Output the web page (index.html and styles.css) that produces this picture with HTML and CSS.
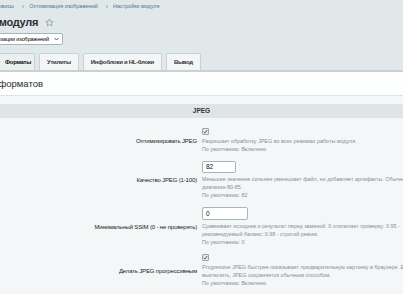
FILE: index.html
```html
<!DOCTYPE html>
<html lang="ru">
<head>
    <meta charset="UTF-8">
    <title>Настройки модуля</title>
    <link rel="stylesheet" href="styles.css">
</head>
<body>
    <div class="top">
        <div class="crumbs">
            <span class="first"><a href="#">Сервисы</a></span>
            <span class="sep">›</span>
            <a href="#">Оптимизация изображений</a>
            <span class="sep">›</span>
            <a href="#">Настройки модуля</a>
        </div>
        <div class="title-row">
            <h1>Настройки модуля</h1>
            <svg class="star" width="9" height="9" viewBox="0 0 24 24"><path d="M12 2.5l2.9 6.3 6.8.7-5.1 4.6 1.5 6.8L12 17.4l-6.1 3.5 1.5-6.8-5.1-4.6 6.8-.7z" fill="none" stroke="#8a979e" stroke-width="2" stroke-linejoin="round"/></svg>
        </div>
        <div class="select-wrap">
            <div class="module-select">
                <span>Модуль оптимизации изображений</span>
                <svg width="5" height="4" viewBox="0 0 10 6"><path d="M1 1l4 4 4-4" fill="none" stroke="#333" stroke-width="1.6"/></svg>
            </div>
        </div>
        <div class="tabs">
            <div class="tab active">Форматы</div>
            <div class="tab">Утилиты</div>
            <div class="tab">Инфоблоки и HL-блоки</div>
            <div class="tab">Вывод</div>
        </div>
    </div>

    <div class="content">
        <div class="heading-wrap">
            <h2>Настройка форматов</h2>
        </div>
    </div>

    <div class="form">
        <div class="section-head">JPEG</div>
        <div class="rows">
            <div class="row">
                <div class="label">Оптимизировать JPEG</div>
                <div class="field">
                    <span class="check"><svg width="5" height="5" viewBox="0 0 10 10"><path d="M1.5 5.5l2.5 2.5 4.5-6" fill="none" stroke="#555" stroke-width="1.8"/></svg></span>
                    <div class="hint">Разрешает обработку JPEG во всех режимах работы модуля.<br>По умолчанию: Включено</div>
                </div>
            </div>
            <div class="row">
                <div class="label">Качество JPEG (1-100)</div>
                <div class="field">
                    <div class="input short">82</div>
                    <div class="hint">Меньшее значение сильнее уменьшает файл, но добавляет артефакты. Обычно подходит диапазон 80-85.<br>По умолчанию: 82</div>
                </div>
            </div>
            <div class="row">
                <div class="label">Минимальный SSIM (0 - не проверять)</div>
                <div class="field">
                    <div class="input wide">0</div>
                    <div class="hint">Сравнивает исходник и результат перед заменой. 0 отключает проверку; 0.95 - рекомендуемый баланс; 0.98 - строгий режим.<br>По умолчанию: 0</div>
                </div>
            </div>
            <div class="row">
                <div class="label">Делать JPEG прогрессивным</div>
                <div class="field">
                    <span class="check"><svg width="5" height="5" viewBox="0 0 10 10"><path d="M1.5 5.5l2.5 2.5 4.5-6" fill="none" stroke="#555" stroke-width="1.8"/></svg></span>
                    <div class="hint">Progressive JPEG быстрее показывает предварительную картинку в браузере. Если выключить, JPEG сохраняется обычным способом.<br>По умолчанию: Включено</div>
                </div>
            </div>
        </div>
    </div>
</body>
</html>
```

FILE: styles.css
```css
body {
    font-family: 'Liberation Sans', Arial, sans-serif;
    margin: 0;
    padding: 0;
    width: 403px;
    height: 294px;
    overflow: hidden;
    background-color: #f4f7f8;
    color: #000;
}
.top {
    background-color: #e1e8ea;
    height: 70px;
    border-bottom: 2px solid #cbd1d3;
}
.crumbs {
    display: flex;
    align-items: center;
    height: 12px;
    font-size: 5.4px;
    white-space: nowrap;
}
.crumbs .first {
    width: 14px;
    display: flex;
    justify-content: flex-end;
}
.crumbs a {
    color: #4a7596;
    text-decoration: none;
}
.crumbs .sep {
    color: #7b8c96;
    font-size: 7px;
    margin: 0 5px 0 8px;
}
.title-row {
    width: 54px;
    display: flex;
    justify-content: flex-end;
    align-items: center;
    gap: 7px;
    height: 14px;
    margin-top: 3px;
}
h1 {
    flex-shrink: 0;
    margin: 0;
    font-size: 11px;
    letter-spacing: -0.3px;
    line-height: 14px;
    font-weight: bold;
    color: #2b2f31;
    white-space: nowrap;
}
.star {
    flex-shrink: 0;
}
.select-wrap {
    width: 63px;
    display: flex;
    justify-content: flex-end;
    margin-top: 4px;
}
.module-select {
    flex-shrink: 0;
    display: flex;
    align-items: center;
    gap: 5px;
    box-sizing: border-box;
    height: 12px;
    padding: 0 3px 0 4px;
    background-color: #fff;
    border: 1px solid #a9b4b9;
    border-radius: 2px;
    font-size: 5.5px;
    letter-spacing: -0.1px;
    white-space: nowrap;
}
.tabs {
    display: flex;
    gap: 4px;
    margin-top: 8px;
    margin-left: -10px;
    height: 17px;
}
.tab {
    box-sizing: border-box;
    height: 17px;
    padding: 0 7px;
    display: flex;
    align-items: center;
    background-color: #f3f6f6;
    border: 1px solid #c9d1d4;
    border-bottom: none;
    border-radius: 2px 2px 0 0;
    font-size: 6px;
    letter-spacing: -0.3px;
    font-weight: bold;
    color: #333;
    white-space: nowrap;
}
.tab.active {
    width: 45px;
    justify-content: flex-end;
    padding-right: 3px;
    background-color: #eaeff0;
    color: #111;
}
.content {
    background-color: #fdfefe;
    height: 23px;
    border-bottom: 1px solid #dde3e4;
    display: flex;
    align-items: center;
}
.heading-wrap {
    width: 43px;
    display: flex;
    justify-content: flex-end;
}
h2 {
    flex-shrink: 0;
    margin: 0;
    font-size: 9.5px;
    font-weight: normal;
    color: #2d2d2d;
    white-space: nowrap;
}
.form {
    padding-top: 8px;
}
.section-head {
    height: 14px;
    line-height: 14px;
    background-color: #dfe5e6;
    text-align: center;
    font-size: 6.5px;
    font-weight: bold;
    color: #333;
}
.rows {
    padding-top: 6px;
}
.row {
    display: grid;
    grid-template-columns: 197px 1fr;
    column-gap: 5px;
    align-items: center;
    padding: 4px 0;
}
.label {
    text-align: right;
    font-size: 6px;
    letter-spacing: -0.15px;
    color: #1a1a1a;
    white-space: nowrap;
}
.field {
    min-width: 0;
}
.check {
    display: flex;
    align-items: center;
    justify-content: center;
    box-sizing: border-box;
    width: 7px;
    height: 7px;
    margin-bottom: 2px;
    background-color: #e4e7e8;
    border: 1px solid #9da5a9;
    border-radius: 1px;
}
.input {
    box-sizing: border-box;
    height: 12px;
    line-height: 10px;
    margin-bottom: 2px;
    padding-left: 3px;
    background-color: #fff;
    border: 1px solid #a9b4b9;
    border-radius: 2px;
    font-size: 6.5px;
    color: #111;
}
.input.short {
    width: 34px;
}
.input.wide {
    width: 46px;
    height: 13px;
    line-height: 11px;
}
.hint {
    width: 228px;
    font-size: 5.4px;
    line-height: 8px;
    color: #8a8e90;
}
```
